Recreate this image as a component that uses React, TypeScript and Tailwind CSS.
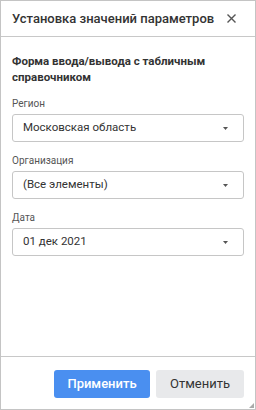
import React from "react";

const fields = [
  { label: "Регион", value: "Московская область" },
  { label: "Организация", value: "(Все элементы)" },
  { label: "Дата", value: "01 дек 2021" },
];

const Select = ({ label, value }: { label: string; value: string }) => (
  <div className="flex flex-col">
    <span className="text-[10px] leading-[14px] text-[#555] mb-[3px]">{label}</span>
    <div className="h-[28px] flex items-center justify-between border border-[#c6c6c6] rounded-[3px] pl-[10px] pr-[15px]">
      <span className="text-[11.5px] text-[#333]">{value}</span>
      <svg width="5" height="3" viewBox="0 0 5 3">
        <path d="M0 0 L5 0 L2.5 3 Z" fill="#555" />
      </svg>
    </div>
  </div>
);

export default function App() {
  return (
    <div
      className="w-[256px] h-[410px] bg-white border border-[#c4c4c4] flex flex-col relative"
      style={{ fontFamily: "Roboto, 'Noto Sans', sans-serif" }}
    >
      <div className="h-[36px] shrink-0 flex items-center justify-between pl-[11px] pr-[19px] border-b border-[#c8c8c8]">
        <span className="text-[13px] font-medium text-[#333] whitespace-nowrap">
          Установка значений параметров
        </span>
        <svg width="9" height="9" viewBox="0 0 9 9">
          <path d="M0.5 0.5 L8.5 8.5 M8.5 0.5 L0.5 8.5" stroke="#555" strokeWidth="1.4" />
        </svg>
      </div>

      <div className="flex-1 flex flex-col px-[11px] pt-[16px] gap-[12px]">
        <div className="text-[11.5px] leading-[16px] font-bold text-[#333]">
          Форма ввода/вывода с табличным
          <br />
          справочником
        </div>
        {fields.map((f) => (
          <Select key={f.label} label={f.label} value={f.value} />
        ))}
      </div>

      <div className="shrink-0 border-t border-[#c8c8c8] flex justify-end gap-[6px] pt-[13px] pb-[11px] pr-[11px]">
        <button className="w-[96px] h-[28px] rounded-[3px] bg-[#4a8ff0] text-white text-[13px] font-medium">
          Применить
        </button>
        <button className="w-[88px] h-[28px] rounded-[3px] bg-[#e8e9eb] text-[#333] text-[13px]">
          Отменить
        </button>
      </div>

      <svg className="absolute right-[1px] bottom-[1px]" width="5" height="5" viewBox="0 0 5 5">
        <path d="M5 0 L5 5 L0 5 Z" fill="#aaa" />
      </svg>
    </div>
  );
}
